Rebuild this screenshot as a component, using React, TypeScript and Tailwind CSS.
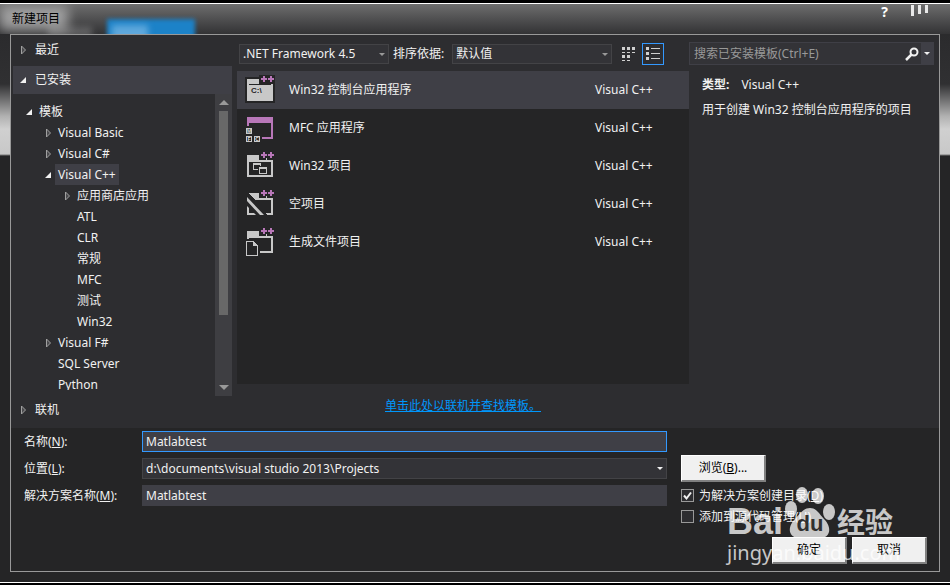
import { useState, type ReactNode } from "react";
import clsx from "clsx";

const templates = [
  { name: "Win32 控制台应用程序", icon: "console" },
  { name: "MFC 应用程序", icon: "mfc" },
  { name: "Win32 项目", icon: "win32" },
  { name: "空项目", icon: "empty" },
  { name: "生成文件项目", icon: "makefile" },
];

const tree = [
  { label: "模板", indent: "pl-[12px]", state: "open" },
  { label: "Visual Basic", indent: "pl-[31px]", state: "closed" },
  { label: "Visual C#", indent: "pl-[31px]", state: "closed" },
  { label: "Visual C++", indent: "pl-[31px]", state: "open", active: true },
  { label: "应用商店应用", indent: "pl-[50px]", state: "closed" },
  { label: "ATL", indent: "pl-[50px]", state: "none" },
  { label: "CLR", indent: "pl-[50px]", state: "none" },
  { label: "常规", indent: "pl-[50px]", state: "none" },
  { label: "MFC", indent: "pl-[50px]", state: "none" },
  { label: "测试", indent: "pl-[50px]", state: "none" },
  { label: "Win32", indent: "pl-[50px]", state: "none" },
  { label: "Visual F#", indent: "pl-[31px]", state: "closed" },
  { label: "SQL Server", indent: "pl-[31px]", state: "none" },
  { label: "Python", indent: "pl-[31px]", state: "none" },
];

function Arrow({ state }: { state: string }) {
  return (
    <svg width="10" height="10" viewBox="0 0 10 10" className="shrink-0">
      {state === "open" && <path d="M7 2v6H1z" fill="#f1f1f1" />}
      {state === "closed" && <path d="M2.5 1v8L6.500 5z" fill="#4a4a4d" stroke="#a0a0a0" />}
    </svg>
  );
}

function Caret({ className }: { className?: string }) {
  return (
    <svg width="6" height="3" viewBox="0 0 6 3" className={className}>
      <path d="M0 0h6L3 3z" fill="currentColor" />
    </svg>
  );
}

function Plus() {
  return <path d="M16 3h2V1h2v2h2v2h-2v2h-2V5h-2zM23 3h2V1h2v2h2v2h-2v2h-2V5h-2z" fill="#b877b8" />;
}

function TemplateIcon({ icon }: { icon: string }) {
  return (
    <svg width="30" height="30" viewBox="0 0 30 30" shapeRendering="crispEdges" className="shrink-0">
      {icon === "console" && (
        <>
          <path d="M0 2h14V0h16v28H0z" fill="#252526" />
          <path d="M2 4h12v5h14v17H2z" fill="#c8c8c8" />
          <path d="M4 9h22v1H4z" fill="#252526" />
          <text x="6" y="18" fontSize="8" fontFamily="Liberation Sans" fontWeight="bold" fill="#252526">C:\</text>
          <Plus />
        </>
      )}
      {icon === "mfc" && (
        <>
          <path d="M2 4h26v22H17v-2h9V10H4v3H2z" fill="#b877b8" />
          <path d="M1.500 15.500h5v5h-5zM1.500 23.500h5v5h-5zM9.500 23.500h5v5h-5z" fill="none" stroke="#c8c8c8" />
          <g fontSize="5" fontFamily="Liberation Sans" fontWeight="bold" fill="#e0e0e0" textAnchor="middle">
            <text x="4" y="20">M</text>
            <text x="4" y="28">F</text>
            <text x="12" y="28">C</text>
          </g>
        </>
      )}
      {icon === "win32" && (
        <>
          <path d="M2 4h12v5h7V7h1v2h6v17H2zM4 11v13h22V11z" fill="#c8c8c8" fillRule="evenodd" />
          <path d="M8 12h8v7H8zM9 14v4h6v-4z" fill="#c8c8c8" fillRule="evenodd" />
          <path d="M13 15h10v9H13z" fill="#252526" />
          <path d="M14 16h8v7h-8zM15 18v4h6v-4z" fill="#c8c8c8" fillRule="evenodd" />
          <Plus />
        </>
      )}
      {icon === "empty" && (
        <>
          <path d="M3 4h11v5h7V7h1v2h6v17h-6l-2-2h6V11H10z" fill="#c8c8c8" />
          <path d="M2 8v4l13 14h4zM2 17v9h9l-2-2H4v-5z" fill="#c8c8c8" shapeRendering="auto" />
          <Plus />
        </>
      )}
      {icon === "makefile" && (
        <>
          <path d="M2 4h12v5h7V7h1v2h6v17H15v-2h11V11H4v1H2z" fill="#c8c8c8" />
          <path d="M1.500 14.500h7l4 4v10h-11z" fill="none" stroke="#c8c8c8" />
          <path d="M8 14l5 5H8z" fill="#c8c8c8" />
          <Plus />
        </>
      )}
    </svg>
  );
}

function SectionRow({ label, state, active }: { label: string; state: string; active?: boolean }) {
  return (
    <button className={clsx("flex h-7 w-full items-center gap-[6px] pl-[6px]", active && "bg-[#3f3f46]")}>
      <Arrow state={state} />
      {label}
    </button>
  );
}

function Sidebar() {
  return (
    <nav className="flex w-[219px] shrink-0 flex-col">
      <SectionRow label="最近" state="closed" />
      <div className="h-[2px]" />
      <SectionRow label="已安装" state="open" active />
      <div className="flex h-[302px]">
        <ul className="mb-[6px] flex-1 overflow-hidden pt-[7px]">
          {tree.map((item) => (
            <li key={item.label}>
              <button className={clsx("flex h-[21px] items-center gap-[1px]", item.indent)}>
                <Arrow state={item.state} />
                <span className={clsx("px-[3px] leading-[21px]", item.active && "bg-[#3f3f46]")}>{item.label}</span>
              </button>
            </li>
          ))}
        </ul>
        <div className="flex w-[17px] flex-col items-center justify-between bg-[#3e3e42] py-[6px]">
          <svg width="10" height="5" viewBox="0 0 10 5"><path d="M5 0l5 5H0z" fill="#999" /></svg>
          <div className="mt-[6px] h-[204px] w-[9px] bg-[#686868]" />
          <div className="flex-1" />
          <svg width="10" height="5" viewBox="0 0 10 5"><path d="M0 0h10L5 5z" fill="#999" /></svg>
        </div>
      </div>
      <SectionRow label="联机" state="closed" />
    </nav>
  );
}

function Dropdown({ label, value, width }: { label: string; value: string; width: string }) {
  return (
    <div className={clsx("relative h-5", width)}>
      <select aria-label={label} className="h-full w-full appearance-none border border-[#434346] bg-[#333337] px-[3px]">
        <option>{value}</option>
      </select>
      <Caret className="pointer-events-none absolute top-[9px] right-1 text-[#999]" />
    </div>
  );
}

function TemplateList() {
  const [selected, setSelected] = useState(0);
  return (
    <section className="flex min-w-0 flex-1 flex-col">
      <div className="flex h-[35px] items-center pl-[2px]">
        <Dropdown label="框架" value=".NET Framework 4.5" width="w-[150px]" />
        <span className="mr-2 ml-1">排序依据:</span>
        <Dropdown label="排序依据" value="默认值" width="w-[160px]" />
        <button aria-label="小图标" className="ml-[6px] flex size-[22px] items-center justify-center">
          <svg width="14" height="14" viewBox="0 0 14 14" shapeRendering="crispEdges" fill="#d0d0d0">
            <path d="M0 0h3v3H0zM5 0h3v3H5zM10 0h3v3h-3zM0 5h3v1H0zM5 5h3v1H5zM10 5h3v1h-3zM0 8h3v3H0zM5 8h3v3H5zM0 13h3v1H0zM5 13h3v1H5z" />
          </svg>
        </button>
        <button aria-label="列表" className="ml-[2px] flex size-[22px] items-center justify-center border border-[#3399ff]">
          <svg width="14" height="14" viewBox="0 0 14 14" shapeRendering="crispEdges" fill="#d0d0d0">
            <path d="M0 0h3v3H0zM5 1h9v1H5zM0 5h3v3H0zM5 6h9v1H5zM0 10h3v3H0zM5 11h9v1H5z" />
          </svg>
        </button>
      </div>
      <ul className="h-[313px] bg-[#252526]">
        {templates.map((item, i) => (
          <li key={item.name}>
            <button
              onClick={() => setSelected(i)}
              className={clsx("flex h-[38px] w-full items-center pl-2 text-left", selected === i && "bg-[#3f3f46]")}
            >
              <TemplateIcon icon={item.icon} />
              <span className="ml-[14px] flex-1">{item.name}</span>
              <span className="w-[94px]">Visual C++</span>
            </button>
          </li>
        ))}
      </ul>
      <div className="flex h-11 items-center justify-center">
        <a href="#online" className="text-[#0097fb] underline">单击此处以联机并查找模板。</a>
      </div>
    </section>
  );
}

function Details() {
  return (
    <aside className="w-[250px] shrink-0 pt-[6px] pr-[5px]">
      <div className="flex h-[23px] border border-[#3f3f46] bg-[#333337]">
        <input
          type="search"
          aria-label="搜索已安装模板"
          placeholder="搜索已安装模板(Ctrl+E)"
          className="min-w-0 flex-1 bg-transparent pl-1 outline-none placeholder:text-[#999]"
        />
        <button aria-label="搜索" className="px-[2px]">
          <svg width="14" height="14" viewBox="0 0 14 14" fill="none" stroke="#f1f1f1">
            <circle cx="9" cy="5" r="3.500" strokeWidth="2" />
            <path d="M6.500 7.500L1 13" strokeWidth="2.500" />
          </svg>
        </button>
        <button aria-label="搜索选项" className="flex w-3 items-center justify-center bg-[#3f3f46]">
          <Caret />
        </button>
      </div>
      <dl className="flex gap-3 pt-[10px] pl-[13px] leading-5">
        <dt className="font-bold">类型:</dt>
        <dd>Visual C++</dd>
      </dl>
      <p className="pt-[5px] pl-[13px] leading-5">用于创建 Win32 控制台应用程序的项目</p>
    </aside>
  );
}

function PushButton({ children, className }: { children: ReactNode; className: string }) {
  return (
    <button className={clsx("border-t border-r-2 border-b-2 border-l border-t-white border-r-[#808080] border-b-[#808080] border-l-white bg-[#f0f0f0] text-black", className)}>
      {children}
    </button>
  );
}

function CheckBox({ children, defaultChecked }: { children: ReactNode; defaultChecked?: boolean }) {
  return (
    <label className="flex h-[21px] items-center gap-[5px]">
      <span className="relative size-[13px]">
        <input type="checkbox" defaultChecked={defaultChecked} className="peer block size-full appearance-none border border-[#999] bg-[#2d2d30]" />
        <svg width="13" height="13" viewBox="0 0 13 13" className="pointer-events-none absolute inset-0 hidden peer-checked:block">
          <path d="M3 6.500l2.500 3L10 3.500" fill="none" stroke="#f1f1f1" strokeWidth="2" />
        </svg>
      </span>
      <span>{children}</span>
    </label>
  );
}

function ProjectForm() {
  return (
    <form className="flex flex-1 flex-col bg-[#252526] pt-[3px] pr-3 pb-[7px] pl-[13px]">
      <div className="flex">
        <div className="grid flex-1 auto-rows-[21px] grid-cols-[118px_1fr] items-center gap-y-[6px]">
          <label htmlFor="name">名称(<u>N</u>):</label>
          <input id="name" defaultValue="Matlabtest" className="h-full min-w-0 border border-[#3399ff] bg-[#3f3f46] px-[3px] outline-none" />
          <label htmlFor="location">位置(<u>L</u>):</label>
          <div className="relative h-full">
            <select id="location" className="h-full w-full appearance-none border border-[#434346] bg-[#333337] px-[3px]">
              <option>d:\documents\visual studio 2013\Projects</option>
            </select>
            <Caret className="pointer-events-none absolute top-[9px] right-1" />
          </div>
          <label htmlFor="solution">解决方案名称(<u>M</u>):</label>
          <input id="solution" defaultValue="Matlabtest" className="h-full min-w-0 border border-[#3f3f46] bg-[#3f3f46] px-[3px] outline-none" />
        </div>
        <div className="w-[260px] shrink-0 pt-6 pl-[14px]">
          <PushButton className="mb-[3px] h-[27px] w-[85px]">浏览(<u>B</u>)...</PushButton>
          <CheckBox defaultChecked>为解决方案创建目录(<u>D</u>)</CheckBox>
          <CheckBox>添加到源代码管理(<u>U</u>)</CheckBox>
        </div>
      </div>
      <div className="mt-auto flex justify-end gap-[5px]">
        <PushButton className="h-[27px] w-[75px]">确定</PushButton>
        <PushButton className="h-[27px] w-[75px]">取消</PushButton>
      </div>
    </form>
  );
}

function Watermark() {
  return (
    <div className="pointer-events-none absolute right-[42px] bottom-[5px] w-[170px] text-white/75">
      <div className="flex h-[56px] items-end">
        <span className="font-['Liberation_Sans'] text-[36px] leading-[36px] font-bold">Bai</span>
        <div className="relative h-[56px] w-[54px] shrink-0">
          <svg width="54" height="56" viewBox="0 0 54 56" fill="currentColor">
            <ellipse cx="19" cy="11" rx="6" ry="8" />
            <ellipse cx="35" cy="12" rx="6" ry="8" />
            <ellipse cx="8" cy="25" rx="6" ry="8" />
            <ellipse cx="46" cy="28" rx="6" ry="8" />
            <path d="M27 24c7 0 9 6 14 11 8 8 7 19-4 19-4 0-6-1-10-1s-6 1-10 1C5 54 4 43 12 35c5-5 8-11 15-11z" />
          </svg>
          <span className="absolute inset-x-0 bottom-1 text-center font-['Liberation_Sans'] text-[22px] leading-6 font-bold text-[#303030]">du</span>
        </div>
        <span className="text-[28px] leading-[36px] font-bold whitespace-nowrap">经验</span>
      </div>
      <div className="font-['Noto_Sans'] text-[20px] leading-[26px]">jingyan.baidu.com</div>
    </div>
  );
}

export default function App() {
  return (
    <div className="flex min-h-screen flex-col border-t-[3px] border-b-[2px] border-black bg-[#252526] font-['Noto_Sans','Noto_Sans_CJK_SC',sans-serif] text-[12px] leading-4 text-[#f1f1f1]">
      <header className="relative flex h-[31px] shrink-0 items-center justify-between overflow-hidden border-t border-white bg-linear-to-b from-[#6e6e6e] to-[#333335] pr-5 pl-3">
        <div className="absolute top-[15px] left-[107px] h-6 w-[88px] bg-[#1c82c8] blur-[2px]" />
        <div className="absolute top-[21px] left-[112px] h-4 w-[36px] bg-[#5fa8dc] blur-[3px]" />
        <div className="absolute top-[23px] left-[48px] h-3 w-[44px] bg-white/20 blur-[3px]" />
        <div className="absolute top-[3px] left-0 h-6 w-[68px] bg-white/45 blur-[6px]" />
        <h1 className="relative text-black">新建项目</h1>
        <div className="flex items-start gap-[22px] self-start">
          <button aria-label="帮助" className="text-[14px] leading-4 font-bold text-white">?</button>
          <button aria-label="关闭" className="pt-[1px]">
            <svg width="20" height="12" viewBox="0 0 20 12" fill="#e8e8e8">
              <path d="M1 0h3v11H1zM8 0h3v9H8zM15 0h3v8h-3z" />
            </svg>
          </button>
        </div>
      </header>
      <div className="flex flex-1 flex-col border-b border-white bg-[linear-gradient(to_bottom,#2b2b2d_0,#303032_50px,#b0b0b0_82px,#d0d0d0_95px,#c8c8c8_120px,#777_121px,#252526_122px)] px-[10px] pb-[10px]">
        <main className="relative flex flex-1 flex-col border border-[#999]">
          <div className="flex bg-[#2d2d30] pt-[1px] pl-[2px]">
            <Sidebar />
            <div className="w-[5px] shrink-0" />
            <TemplateList />
            <Details />
          </div>
          <ProjectForm />
          <Watermark />
        </main>
      </div>
    </div>
  );
}
